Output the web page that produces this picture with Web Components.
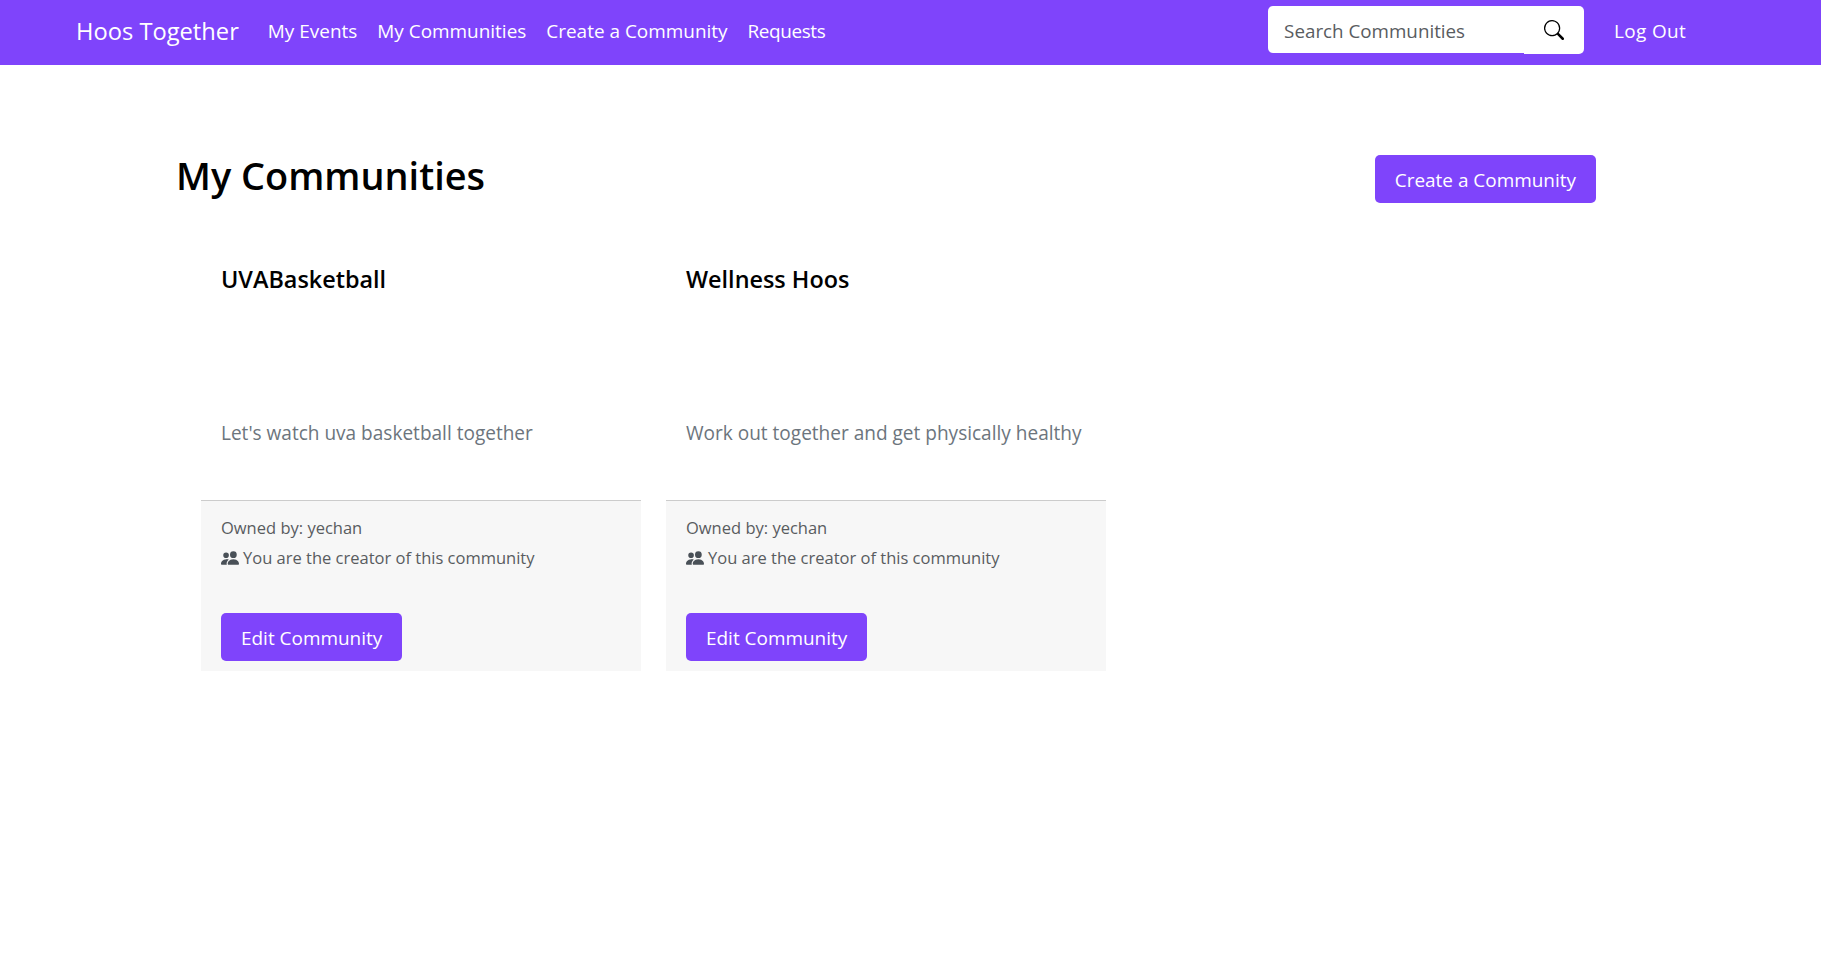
<!DOCTYPE html>
<html lang="en"><head><meta charset="utf-8"><title>Hoos Together</title>
<style>
html,body{margin:0;padding:0;background:#fff;font-family:"Open Sans","Noto Sans",sans-serif;}
</style></head><body>
<app-nav>
  <a slot="brand">Hoos Together</a>
  <nav-link>My Events</nav-link><nav-link>My Communities</nav-link><nav-link>Create a Community</nav-link><nav-link style="letter-spacing:-.4px">Requests</nav-link>
  <search-box slot="end" placeholder="Search Communities"></search-box>
  <nav-link slot="end" style="letter-spacing:.33px">Log Out</nav-link>
</app-nav>
<page-main>
  <page-head title="My Communities"><purple-btn>Create a Community</purple-btn></page-head>
  <card-grid>
    <community-card name="UVABasketball" desc="Let's watch uva basketball together" owner="yechan"></community-card>
    <community-card name="Wellness Hoos" desc="Work out together and get physically healthy" owner="yechan"></community-card>
  </card-grid>
</page-main>
<script>
const mk=(name,html)=>customElements.define(name,class extends HTMLElement{
  constructor(){super();const s=this.attachShadow({mode:'open'});s.innerHTML=html;}
  connectedCallback(){const s=this.shadowRoot;s.querySelectorAll('[data-a]').forEach(e=>{e.textContent=this.getAttribute(e.dataset.a)||''});}
});
mk('app-nav',`<style>
:host{display:flex;align-items:center;box-sizing:border-box;height:65px;background:#7f44fb;color:#fff;padding:0 135px 5px 76px}
.brand{font-size:23.7px;margin-right:29px;white-space:nowrap;padding-top:2px}
.links{display:flex;gap:20px;flex:1}
.end{display:flex;align-items:center;gap:30px}
</style><div class="brand"><slot name="brand"></slot></div><div class="links"><slot></slot></div><div class="end"><slot name="end"></slot></div>`);
mk('nav-link',`<style>:host{display:block;font-size:18.95px;color:#fff;white-space:nowrap;line-height:27px;padding-top:2px}</style><slot></slot>`);
mk('search-box',`<style>
:host{display:flex;align-items:flex-start;width:316px;height:48px;color:#595c5f;font-size:18.8px}
.i{width:256px;height:47px;background:#fff;border-radius:5px 0 0 5px;box-sizing:border-box;padding-left:16px;line-height:51px;white-space:nowrap}
.b{flex:1;height:48px;background:#fff;border-radius:0 5px 5px 0;display:flex;align-items:center;justify-content:center}
svg{width:20px;height:20px;display:block}
</style><div class="i" data-a="placeholder"></div><div class="b"><svg viewBox="0 0 16 16" fill="#000"><path d="M11.742 10.344a6.5 6.5 0 1 0-1.397 1.398h-.001c.03.04.062.078.098.115l3.85 3.85a1 1 0 0 0 1.415-1.414l-3.85-3.85a1.007 1.007 0 0 0-.115-.1zM12 6.5a5.5 5.5 0 1 1-11 0 5.5 5.5 0 0 1 11 0z"/></svg></div>`);
mk('page-main',`<style>:host{display:block;padding:90px 225px 0 177px}</style><slot></slot>`);
mk('page-head',`<style>
:host{display:flex;justify-content:space-between;align-items:flex-start;height:98px}
h1{margin:-2px 0 0 -1px;font-size:37.9px;font-weight:600;line-height:45px;color:#000;white-space:nowrap}
</style><h1 data-a="title"></h1><slot></slot>`);
mk('purple-btn',`<style>:host{display:inline-block;box-sizing:border-box;height:48px;line-height:50px;padding:0 20px;background:#7f44fb;color:#fff;border-radius:5px;font-size:18.95px;white-space:nowrap}</style><slot></slot>`);
mk('card-grid',`<style>:host{display:grid;grid-template-columns:440px 440px;gap:25px;padding-left:24px}</style><slot></slot>`);
mk('community-card',`<style>
:host{display:flex;flex-direction:column;height:418px}
.body{height:247px;box-sizing:border-box;padding:11px 20px 0;display:flex;flex-direction:column}
h2{margin:0;font-size:23.4px;font-weight:600;line-height:30px;color:#000}
p{margin:0;margin-top:auto;padding-bottom:52px;font-size:19.05px;line-height:30px;color:#6c757d;white-space:nowrap}
.foot{flex:1;background:#f7f7f7;border-top:1px solid #ccc;padding:0 20px;color:#595c5f;font-size:16.5px;display:flex;flex-direction:column;align-items:flex-start}
.l{line-height:30px;white-space:nowrap;display:flex;align-items:center;gap:4px}
.l1{margin-top:12px;white-space:pre}
svg{width:18px;height:18px;display:block;fill:#495057}
purple-btn{margin-top:40px}
</style><div class="body"><h2 data-a="name"></h2><p data-a="desc"></p></div>
<div class="foot"><div class="l l1"><span>Owned by: <span data-a="owner"></span></span></div><div class="l"><svg viewBox="0 0 16 16"><path d="M7 14s-1 0-1-1 1-4 5-4 5 3 5 4-1 1-1 1H7Zm4-6a3 3 0 1 0 0-6 3 3 0 0 0 0 6Zm-5.784 6A2.238 2.238 0 0 1 5 13c0-1.355.68-2.75 1.936-3.72A6.325 6.325 0 0 0 5 9c-4 0-5 3-5 4s1 1 1 1h4.216ZM4.5 8a2.5 2.5 0 1 0 0-5 2.5 2.5 0 0 0 0 5Z"/></svg>You are the creator of this community</div><purple-btn>Edit Community</purple-btn></div>`);
</script>
</body></html>
